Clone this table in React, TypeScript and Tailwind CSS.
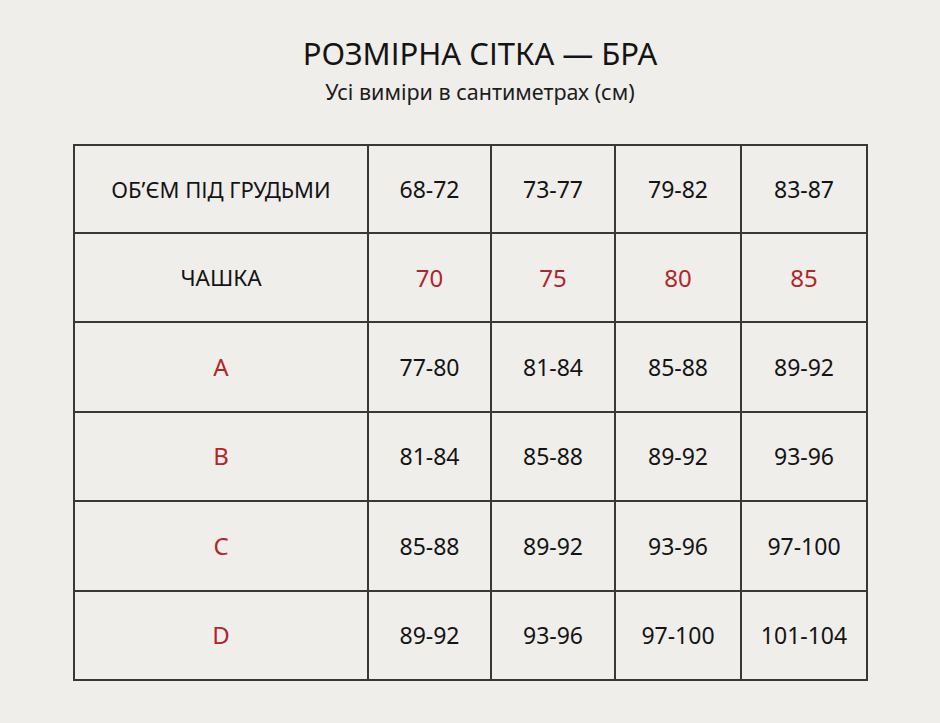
const sizes = ["68-72", "73-77", "79-82", "83-87"];
const cups = ["70", "75", "80", "85"];

const rows = [
  { cup: "A", values: ["77-80", "81-84", "85-88", "89-92"] },
  { cup: "B", values: ["81-84", "85-88", "89-92", "93-96"] },
  { cup: "C", values: ["85-88", "89-92", "93-96", "97-100"] },
  { cup: "D", values: ["89-92", "93-96", "97-100", "101-104"] },
];

const cell = "border-2 border-[#383838] text-center align-middle";

export default function App() {
  return (
    <div
      className="w-[940px] h-[723px] bg-[#efeeeb] text-[#141414] overflow-hidden"
      style={{ fontFamily: '"Noto Sans", "Open Sans", sans-serif' }}
    >
      <div className="pt-[31px] pl-[20px] flex flex-col items-center">
        <h1 className="text-[31px] leading-[44px]">РОЗМІРНА СІТКА — БРА</h1>
        <p className="mt-[2px] text-[21.5px] leading-[30px] text-[#1c1c1c]">
          Усі виміри в сантиметрах (см)
        </p>
      </div>

      <table className="ml-[73px] mt-[37px] w-[793px] border-collapse table-fixed">
        <colgroup>
          <col className="w-[294px]" />
          <col className="w-[123px]" />
          <col className="w-[124px]" />
          <col className="w-[126px]" />
          <col className="w-[126px]" />
        </colgroup>
        <tbody>
          <tr className="h-[88px]">
            <td className={`${cell} text-[22px]`}>ОБ’ЄМ ПІД ГРУДЬМИ</td>
            {sizes.map((s) => (
              <td key={s} className={`${cell} text-[23px]`}>
                {s}
              </td>
            ))}
          </tr>
          <tr className="h-[89px]">
            <td className={`${cell} text-[22.5px]`}>ЧАШКА</td>
            {cups.map((c) => (
              <td key={c} className={`${cell} text-[24px] text-[#b0262c]`}>
                {c}
              </td>
            ))}
          </tr>
          {rows.map((row) => (
            <tr key={row.cup} className="h-[89.5px]">
              <td className={`${cell} text-[24px] text-[#b0262c]`}>
                {row.cup}
              </td>
              {row.values.map((v, i) => (
                <td key={i} className={`${cell} text-[23px]`}>
                  {v}
                </td>
              ))}
            </tr>
          ))}
        </tbody>
      </table>
    </div>
  );
}
